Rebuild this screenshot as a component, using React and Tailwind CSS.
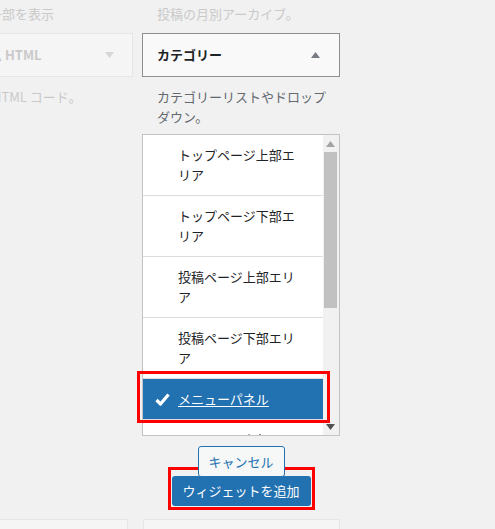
// Widget chooser: category widget expanded with sidebar picker, rest faded.
const AREAS = [
  'トップページ上部エリア',
  'トップページ下部エリア',
  '投稿ページ上部エリア',
  '投稿ページ下部エリア',
]

function Check() {
  return (
    <svg width="15" height="13" viewBox="0 0 15 13" className="shrink-0">
      <path d="M1.5 7 L5.5 11 L13.5 1.5" fill="none" stroke="#fff" strokeWidth="3.2" strokeLinejoin="round" />
    </svg>
  )
}

function Tri({ up, color }) {
  return (
    <svg width="9" height="6" viewBox="0 0 9 6">
      <path d={up ? 'M0 6 L4.5 0 L9 6 Z' : 'M0 0 L4.5 6 L9 0 Z'} fill={color} />
    </svg>
  )
}

export default function App() {
  return (
    <div
      className="w-[495px] h-[529px] overflow-hidden bg-[#f1f1f1] text-[13px] leading-[20px]"
      style={{ fontFamily: '"Noto Sans CJK JP", "Noto Sans", sans-serif' }}
    >
      <div className="flex gap-[9px] pt-[4px]">
        {/* faded left column */}
        <div className="ml-[-65px] w-[198px] shrink-0 text-[#c9c9c9]">
          <div className="pl-[15px] whitespace-nowrap">情報の一部を表示</div>
          <div className="mt-[9px] h-[44px] border border-[#e6e6e6] bg-[#f5f5f5] flex items-center justify-between pl-[14px] pr-[18px]">
            <span className="font-semibold">カスタム HTML</span>
            <Tri color="#d6d6d6" />
          </div>
          <div className="mt-[10px] pl-[15px] whitespace-nowrap">任意の HTML コード。</div>
        </div>

        {/* category widget */}
        <div className="w-[198px] shrink-0 flex flex-col">
          <div className="pl-[15px] text-[#c9c9c9] whitespace-nowrap">投稿の月別アーカイブ。</div>
          <div className="mt-[9px] h-[44px] border border-[#8c8f94] bg-[#f9f9f9] flex items-center justify-between pl-[14px] pr-[19px]">
            <span className="font-semibold text-[#1d2327]">カテゴリー</span>
            <Tri up color="#787c82" />
          </div>
          <div className="mt-[10px] pl-[15px] text-[#646970] whitespace-nowrap">
            カテゴリーリストやドロップ
            <br />
            ダウン。
          </div>

          <div className="relative mt-[7px]">
            <div className="h-[302px] border border-[#c3c4c7] bg-white flex overflow-hidden">
              <div className="w-[180px] shrink-0 text-[#1d2327]">
                {AREAS.map((a) => (
                  <div key={a} className="border-b border-[#dcdcde] py-[10px] pl-[35px]">
                    <div className="w-[120px]">{a}</div>
                  </div>
                ))}
                <div className="bg-[#2271b1] text-white flex items-center gap-[8px] py-[10px] pl-[12px] border-b border-[#dcdcde]">
                  <Check />
                  <span className="underline underline-offset-2">メニューパネル</span>
                </div>
                <div className="py-[10px] pl-[35px]">
                  <div className="w-[120px]">サイドバー上部エリア</div>
                </div>
              </div>
              {/* scrollbar */}
              <div className="w-[16px] shrink-0 bg-[#f1f1f1] flex flex-col items-start">
                <div className="h-[17px] w-[15px] flex items-center justify-center">
                  <Tri up color="#a3a3a3" />
                </div>
                <div className="ml-px w-[13px] h-[156px] bg-[#c1c1c1]" />
                <div className="flex-1" />
                <div className="h-[17px] w-[15px] flex items-center justify-center">
                  <Tri color="#505050" />
                </div>
              </div>
            </div>
            <div className="absolute left-[-5px] top-[237px] w-[193px] h-[52px] border-[3px] border-[#ff0000] pointer-events-none" />
          </div>

          <div className="mt-[10px] flex flex-col items-center">
            <button className="relative z-10 h-[31px] w-[87px] rounded-[3px] border border-[#2271b1] bg-[#f6f7f7] text-[#2271b1]">
              キャンセル
            </button>
            <div className="relative -mt-px">
              <div className="absolute left-[-4px] right-[-4px] top-[-9px] bottom-[-4px] border-[3px] border-[#ff0000]" />
              <button className="relative h-[30px] w-[139px] rounded-[3px] bg-[#2271b1] text-white">
                ウィジェットを追加
              </button>
            </div>
          </div>
        </div>
      </div>

      {/* next row, faded */}
      <div className="flex gap-[15px] mt-[13px]">
        <div className="ml-[-65px] w-[193px] h-[40px] shrink-0 border border-[#e6e6e6] bg-[#f5f5f5]" />
        <div className="w-[197px] h-[40px] shrink-0 border border-[#e6e6e6] bg-[#f5f5f5]" />
      </div>
    </div>
  )
}
